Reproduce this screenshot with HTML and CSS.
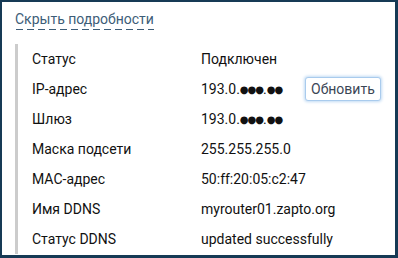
FILE: index.html
```html
<!DOCTYPE html>
<html lang="ru">
<head>
<meta charset="utf-8">
<link rel="stylesheet" href="styles.css">
</head>
<body>
<div class="frame">
  <a class="toggle" href="#">Скрыть подробности</a>
  <div class="details">
    <div class="row"><span class="label">Статус</span><span class="value">Подключен</span></div>
    <div class="row"><span class="label">IP-адрес</span><span class="value">193.0.<span class="mask">●●●</span>.<span class="mask">●●</span></span><button class="btn">Обновить</button></div>
    <div class="row"><span class="label">Шлюз</span><span class="value">193.0.<span class="mask">●●●</span>.<span class="mask">●●</span></span></div>
    <div class="row"><span class="label">Маска подсети</span><span class="value">255.255.255.0</span></div>
    <div class="row"><span class="label">MAC-адрес</span><span class="value">50:ff:20:05:c2:47</span></div>
    <div class="row"><span class="label">Имя DDNS</span><span class="value">myrouter01.zapto.org</span></div>
    <div class="row"><span class="label">Статус DDNS</span><span class="value">updated successfully</span></div>
  </div>
</div>
</body>
</html>
```
FILE: styles.css
```css
html, body {
  margin: 0;
  padding: 0;
  background: #fff;
}
.frame {
  box-sizing: border-box;
  width: 398px;
  height: 258px;
  border-style: solid;
  border-color: #163a55;
  border-width: 2px 3px 3px 2px;
  padding: 9px 0 0 13px;
  font-family: Roboto, "Liberation Sans", sans-serif;
  font-size: 14px;
  color: #111;
  overflow: hidden;
}
.toggle {
  display: inline-block;
  color: #3d5d78;
  text-decoration: none;
  line-height: 16px;
  padding-bottom: 3px;
  background-image: linear-gradient(to right, #3d5d78 0, #3d5d78 7px, transparent 7px, transparent 11px);
  background-size: 11px 1px;
  background-repeat: repeat-x;
  background-position: 1px 100%;
}
.details {
  margin-top: 14px;
  border-left: 3px solid #cccccc;
  padding: 0 0 0 14px;
  height: 210px;
  display: flex;
  flex-direction: column;
}
.row {
  height: 30px;
  display: flex;
  align-items: center;
}
.label {
  width: 169px;
}
.value {
  width: 104px;
  white-space: nowrap;
}
.mask {
  font-family: "DejaVu Sans", sans-serif;
  font-size: 10px;
  letter-spacing: -1px;
  position: relative;
  top: -1px;
}
.btn {
  font-family: Roboto, "Liberation Sans", sans-serif;
  font-size: 14px;
  color: #3b4656;
  background: #fff;
  border: 1px solid #a9cbed;
  border-radius: 3px;
  box-shadow: 0 0 3px 1px #c2dbf4;
  height: 24px;
  padding: 0 5px;
  cursor: pointer;
}
```
